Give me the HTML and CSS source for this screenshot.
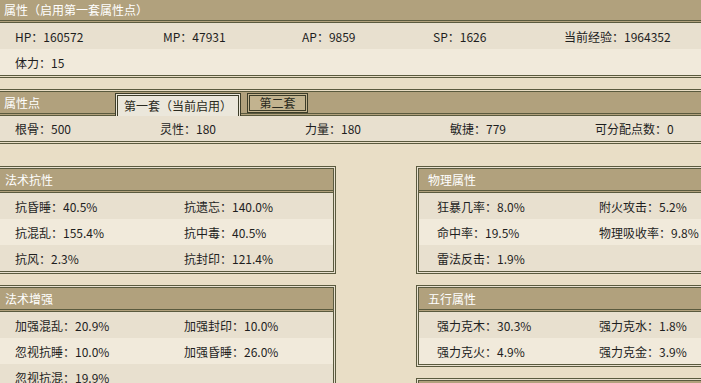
FILE: index.html
```html
<!DOCTYPE html>
<html lang="zh-CN">
<head>
    <meta charset="UTF-8">
    <title>人物属性</title>
    <link rel="stylesheet" href="styles.css">
</head>
<body>
<div class="page">

    <div class="section">
        <div class="bar">属性（启用第一套属性点）</div>
        <div class="stats stats-main">
            <span>HP：160572</span>
            <span>MP：47931</span>
            <span>AP：9859</span>
            <span>SP：1626</span>
            <span>当前经验：1964352</span>
        </div>
        <div class="stats stats-main light">
            <span>体力：15</span>
        </div>
    </div>

    <div class="section section-top">
        <div class="bar bar-tabs">
            <span class="bar-title">属性点</span>
            <span class="tab active">第一套（当前启用）</span>
            <span class="tab">第二套</span>
        </div>
        <div class="stats stats-points">
            <span>根骨：500</span>
            <span>灵性：180</span>
            <span>力量：180</span>
            <span>敏捷：779</span>
            <span>可分配点数：0</span>
        </div>
    </div>

    <div class="panels">
        <div class="column">
            <div class="panel panel-left">
                <div class="panel-bar">法术抗性</div>
                <div class="row"><span>抗昏睡：40.5%</span><span>抗遗忘：140.0%</span></div>
                <div class="row"><span>抗混乱：155.4%</span><span>抗中毒：40.5%</span></div>
                <div class="row"><span>抗风：2.3%</span><span>抗封印：121.4%</span></div>
            </div>
            <div class="panel panel-left">
                <div class="panel-bar">法术增强</div>
                <div class="row"><span>加强混乱：20.9%</span><span>加强封印：10.0%</span></div>
                <div class="row"><span>忽视抗睡：10.0%</span><span>加强昏睡：26.0%</span></div>
                <div class="row"><span>忽视抗混：19.9%</span><span></span></div>
            </div>
        </div>
        <div class="column">
            <div class="panel panel-right">
                <div class="panel-bar">物理属性</div>
                <div class="row"><span>狂暴几率：8.0%</span><span>附火攻击：5.2%</span></div>
                <div class="row"><span>命中率：19.5%</span><span>物理吸收率：9.8%</span></div>
                <div class="row"><span>雷法反击：1.9%</span><span></span></div>
            </div>
            <div class="panel panel-right">
                <div class="panel-bar">五行属性</div>
                <div class="row"><span>强力克木：30.3%</span><span>强力克水：1.8%</span></div>
                <div class="row"><span>强力克火：4.9%</span><span>强力克金：3.9%</span></div>
            </div>
            <div class="panel panel-right">
                <div class="panel-bar">其他属性</div>
                <div class="row"><span></span><span></span></div>
            </div>
        </div>
    </div>

</div>
</body>
</html>
```

FILE: styles.css
```css
body {
    margin: 0;
    background: #e9dec6;
    font-family: "Noto Sans CJK SC", "Liberation Sans", sans-serif;
    font-size: 12px;
    color: #1e1e1e;
    overflow: hidden;
}
.page {
    margin-left: -7px;
    width: 740px;
}
.section {
    border-bottom: 3px double #5a5a3e;
}
.section-top {
    margin-top: 11px;
    border-top: 3px double #5a5a3e;
}
.bar {
    background: #b1a17d;
    color: white;
    height: 20px;
    line-height: 20px;
    padding-left: 11px;
    border-bottom: 3px double #5a5a3e;
}
.bar-tabs {
    height: 21px;
    display: flex;
    align-items: flex-end;
    gap: 6px;
}
.bar-title {
    width: 105px;
    align-self: center;
}
.tab {
    box-sizing: border-box;
    height: 20px;
    line-height: 14px;
    width: 61px;
    text-align: center;
    color: #2a2a20;
    background: #c2b38f;
    border: 3px double #3c3c28;
    margin-bottom: 0;
}
.tab.active {
    width: 126px;
    height: 23px;
    line-height: 20px;
    background: #ebe7db;
    border-bottom: none;
    margin-bottom: -3px;
    position: relative;
    z-index: 1;
}
.stats {
    display: grid;
    height: 26px;
    align-items: center;
    padding-left: 22px;
    background: #e8e0cf;
}
.stats.light {
    background: #f1eadb;
}
.stats-main {
    grid-template-columns: 148px 139px 131px 131px auto;
}
.stats-points {
    height: 25px;
    grid-template-columns: repeat(5, 145px);
}
.panels {
    display: grid;
    grid-template-columns: 343px 300px;
    column-gap: 80px;
    margin-top: 22px;
}
.column {
    display: flex;
    flex-direction: column;
    gap: 11px;
}
.panel {
    border: 3px double #5a5a3e;
    background: #e8e0cf;
}
.panel-bar {
    background: #b1a17d;
    color: white;
    height: 21px;
    line-height: 21px;
    padding-left: 9px;
    border-bottom: 3px double #5a5a3e;
}
.row {
    display: grid;
    height: 26px;
    align-items: center;
    padding-left: 19px;
}
.row:nth-child(odd) {
    background: #f1eadb;
}
.panel-left .row {
    grid-template-columns: 169px auto;
}
.panel-right .row {
    padding-left: 18px;
    grid-template-columns: 162px auto;
}
```
